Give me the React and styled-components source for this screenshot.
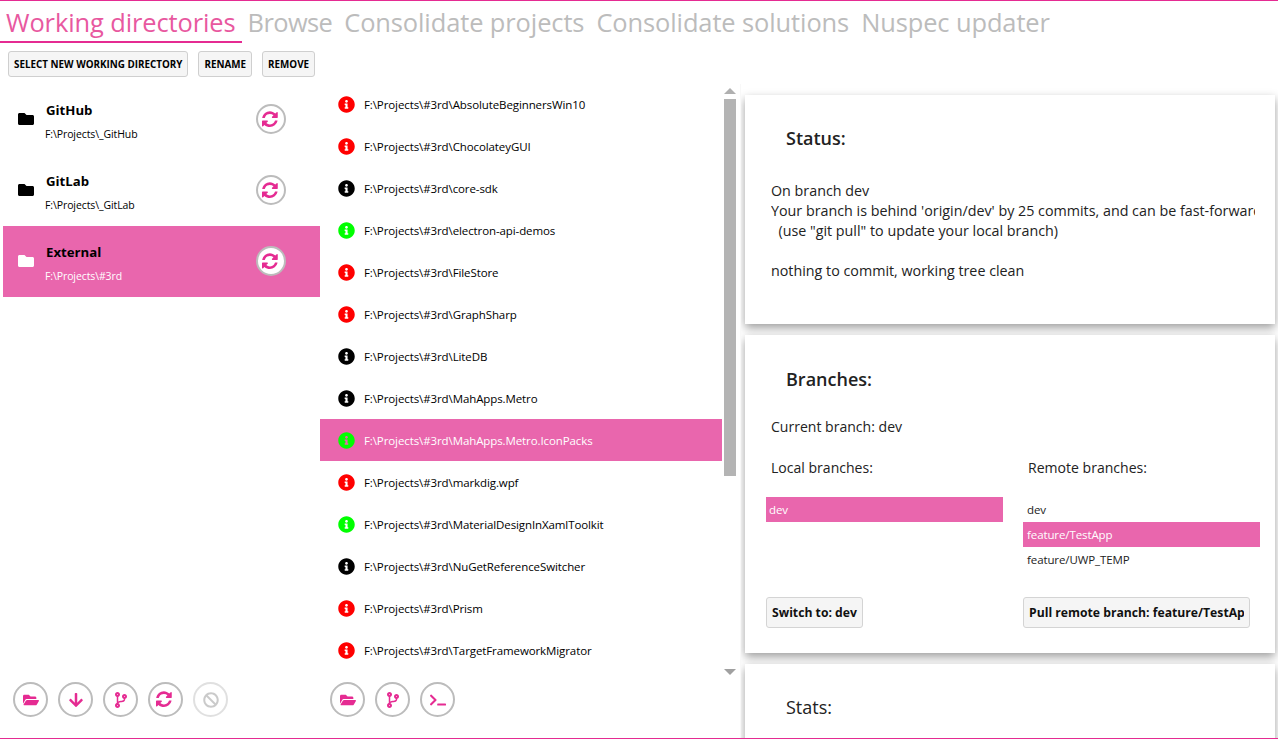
import React from 'react'
import styled, { createGlobalStyle } from 'styled-components'
import {
  FaFolder,
  FaFolderOpen,
  FaArrowDown,
  FaCodeBranch,
  FaBan,
  FaTerminal,
  FaInfoCircle,
} from 'react-icons/fa'

const PINK = '#e52b92'
const SELECTED = '#e966ad'

const tabs = ['Working directories', 'Browse', 'Consolidate projects', 'Consolidate solutions', 'Nuspec updater']

const directories = [
  { name: 'GitHub', path: 'F:\\Projects\\_GitHub' },
  { name: 'GitLab', path: 'F:\\Projects\\_GitLab' },
  { name: 'External', path: 'F:\\Projects\\#3rd', selected: true },
]

const repos = [
  ['AbsoluteBeginnersWin10', '#ff0000'],
  ['ChocolateyGUI', '#ff0000'],
  ['core-sdk', '#000000'],
  ['electron-api-demos', '#00ff00'],
  ['FileStore', '#ff0000'],
  ['GraphSharp', '#ff0000'],
  ['LiteDB', '#000000'],
  ['MahApps.Metro', '#000000'],
  ['MahApps.Metro.IconPacks', '#00ff00'],
  ['markdig.wpf', '#ff0000'],
  ['MaterialDesignInXamlToolkit', '#00ff00'],
  ['NuGetReferenceSwitcher', '#000000'],
  ['Prism', '#ff0000'],
  ['TargetFrameworkMigrator', '#ff0000'],
]

// the older, heavier refresh glyph; the one in the icon package is too thin
const RefreshIcon = () => (
  <svg viewBox="0 0 1792 1792" width="1.15em" height="1.15em" fill="currentColor">
    <path d="M1511 1056q0 5-1 7-64 268-268 434.5t-478 166.5q-146 0-282.5-55t-243.5-157l-129 129q-19 19-45 19t-45-19-19-45v-448q0-26 19-45t45-19h448q26 0 45 19t19 45-19 45l-137 137q71 66 161 102t187 36q134 0 250-65t186-179q11-17 53-117 8-23 30-23h192q13 0 22.5 9.5t9.5 22.5zm25-800v448q0 26-19 45t-45 19h-448q-26 0-45-19t-19-45 19-45l138-138q-148-137-349-137-134 0-250 65t-186 179q-11 17-53 117-8 23-30 23h-199q-13 0-22.5-9.5t-9.5-22.5v-7q65-268 270-434.5t480-166.5q146 0 284 55.5t245 156.5l130-129q19-19 45-19t45 19 19 45z" />
  </svg>
)

function App() {
  return (
    <Page>
      <GlobalStyle />
      <TabBar>
        {tabs.map((tab, i) => (
          <Tab key={tab} $active={i === 0} $tight={tab === 'Browse'}>{tab}</Tab>
        ))}
      </TabBar>

      <ActionBar>
        <ActionButton>SELECT NEW WORKING DIRECTORY</ActionButton>
        <ActionButton>RENAME</ActionButton>
        <ActionButton>REMOVE</ActionButton>
      </ActionBar>

      <Columns>
        <LeftPane>
          <DirList>
            {directories.map((d) => (
              <DirRow key={d.name} $selected={d.selected}>
                <DirIcon $selected={d.selected}><FaFolder /></DirIcon>
                <DirText>
                  <DirName>{d.name}</DirName>
                  <DirPath $selected={d.selected}>{d.path}</DirPath>
                </DirText>
                <SyncButton><RefreshIcon /></SyncButton>
              </DirRow>
            ))}
          </DirList>
          <Toolbar>
            <RoundButton><FaFolderOpen /></RoundButton>
            <RoundButton><FaArrowDown /></RoundButton>
            <RoundButton><FaCodeBranch /></RoundButton>
            <RoundButton><RefreshIcon /></RoundButton>
            <RoundButton $disabled><FaBan /></RoundButton>
          </Toolbar>
        </LeftPane>

        <MiddlePane>
          <ListArea>
            <RepoList>
              {repos.map(([name, color], i) => (
                <RepoRow key={name} $selected={i === 8}>
                  <RepoIcon $color={color}><FaInfoCircle /></RepoIcon>
                  F:\Projects\#3rd\{name}
                </RepoRow>
              ))}
            </RepoList>
            <ScrollBar>
              <ArrowUp />
              <Thumb />
              <ArrowDown />
            </ScrollBar>
          </ListArea>
          <MiddleToolbar>
            <RoundButton><FaFolderOpen /></RoundButton>
            <RoundButton><FaCodeBranch /></RoundButton>
            <RoundButton><FaTerminal /></RoundButton>
          </MiddleToolbar>
        </MiddlePane>

        <RightPane>
          <Card $height={229}>
            <CardTitle>Status:</CardTitle>
            <StatusText>{`On branch dev
Your branch is behind 'origin/dev' by 25 commits, and can be fast-forwarded.
  (use "git pull" to update your local branch)

nothing to commit, working tree clean`}</StatusText>
          </Card>

          <Card $height={318}>
            <BranchesTitle>Branches:</BranchesTitle>
            <CurrentBranch>Current branch: dev</CurrentBranch>
            <BranchColumns>
              <BranchColumn>
                <BranchHeading>Local branches:</BranchHeading>
                <BranchList>
                  <BranchItem $selected $local>dev</BranchItem>
                </BranchList>
                <SmallSpacer />
                <BranchButton>Switch to: dev</BranchButton>
              </BranchColumn>
              <BranchColumn $remote>
                <BranchHeading>Remote branches:</BranchHeading>
                <BranchList>
                  <BranchItem>dev</BranchItem>
                  <BranchItem $selected>feature/TestApp</BranchItem>
                  <BranchItem>feature/UWP_TEMP</BranchItem>
                </BranchList>
                <SmallSpacer />
                <BranchButton>
                  <ButtonLabel>Pull remote branch: feature/TestApp</ButtonLabel>
                </BranchButton>
              </BranchColumn>
            </BranchColumns>
          </Card>

          <Card $height={120}>
            <StatsTitle>Stats:</StatsTitle>
          </Card>
        </RightPane>
      </Columns>
    </Page>
  )
}

export default App

const GlobalStyle = createGlobalStyle`
  html, body {
    margin: 0;
    padding: 0;
    background: #fff;
    overflow: hidden;
  }
  * {
    box-sizing: border-box;
  }
`

const Page = styled.div`
  width: 1278px;
  height: 739px;
  display: flex;
  flex-direction: column;
  overflow: hidden;
  border-top: 1px solid ${PINK};
  border-bottom: 1px solid ${PINK};
  font-family: "Open Sans", "Noto Sans", sans-serif;
  color: #000;
`

const TabBar = styled.div`
  display: flex;
  height: 42px;
  flex: none;
`

const Tab = styled.div`
  height: 42px;
  padding: 3px 6px 0;
  font-size: 25.45px;
  line-height: 36px;
  letter-spacing: ${(p) => (p.$tight ? '-0.6px' : '-0.1px')};
  white-space: nowrap;
  color: ${(p) => (p.$active ? '#e8589f' : '#bcbcbc')};
  border-bottom: 2px solid ${(p) => (p.$active ? PINK : 'transparent')};
`

const ActionBar = styled.div`
  display: flex;
  gap: 10px;
  flex: none;
  height: 41px;
  padding: 8px 0 0 8px;
`

const ActionButton = styled.div`
  height: 26px;
  padding: 0 5px;
  display: flex;
  align-items: center;
  background: #f5f5f5;
  border: 1px solid #cfcfcf;
  border-radius: 3px;
  font-size: 9.85px;
  font-weight: 700;
  white-space: nowrap;
`

const Columns = styled.div`
  flex: 1;
  display: flex;
  min-height: 0;
`

const LeftPane = styled.div`
  width: 320px;
  flex: none;
  display: flex;
  flex-direction: column;
  padding-left: 3px;
`

const DirList = styled.div`
  flex: 1;
`

const DirRow = styled.div`
  height: 71px;
  display: flex;
  align-items: center;
  padding: 0 34px 0 15px;
  background: ${(p) => (p.$selected ? SELECTED : 'transparent')};
`

const DirIcon = styled.div`
  width: 28px;
  flex: none;
  display: flex;
  font-size: 16px;
  margin-top: -2px;
  color: ${(p) => (p.$selected ? '#fff' : '#000')};
`

const DirText = styled.div`
  flex: 1;
  display: flex;
  flex-direction: column;
  gap: 8px;
  margin-top: 7px;
`

const DirName = styled.div`
  font-size: 13.2px;
  line-height: 18px;
  font-weight: 700;
  margin-top: -4px;
`

const DirPath = styled.div`
  font-size: 10.5px;
  line-height: 14px;
  letter-spacing: -0.1px;
  margin-left: -1px;
  color: ${(p) => (p.$selected ? '#fff' : '#000')};
`

const SyncButton = styled.div`
  width: 30px;
  height: 30px;
  flex: none;
  margin-top: -1px;
  display: flex;
  align-items: center;
  justify-content: center;
  border-radius: 50%;
  border: 2px solid #bcbcbc;
  background: #fff;
  color: ${PINK};
  font-size: 16px;
`

const Toolbar = styled.div`
  display: flex;
  gap: 10px;
  flex: none;
  height: 63px;
  padding: 7px 0 0 10px;
`

const RoundButton = styled.div`
  width: 35px;
  height: 35px;
  display: flex;
  align-items: center;
  justify-content: center;
  border-radius: 50%;
  border: 2px solid #bcbcbc;
  color: ${PINK};
  font-size: 16px;
  opacity: ${(p) => (p.$disabled ? 0.45 : 1)};
  ${(p) => p.$disabled && 'color: #8c8c8c;'}
`

const MiddlePane = styled.div`
  width: 416px;
  flex: none;
  display: flex;
  flex-direction: column;
`

const ListArea = styled.div`
  flex: 1;
  display: flex;
  min-height: 0;
`

const RepoList = styled.div`
  width: 402px;
  flex: none;
  margin-top: -1px;
`

const RepoRow = styled.div`
  height: 42px;
  display: flex;
  align-items: center;
  padding-left: 18px;
  font-size: 11.5px;
  letter-spacing: -0.1px;
  white-space: nowrap;
  background: ${(p) => (p.$selected ? SELECTED : 'transparent')};
  color: ${(p) => (p.$selected ? '#fff' : '#000')};
`

const RepoIcon = styled.span`
  display: flex;
  font-size: 17px;
  margin-right: 9px;
  color: ${(p) => p.$color};
`

const ScrollBar = styled.div`
  width: 13px;
  margin-left: 1px;
  display: flex;
  flex-direction: column;
  align-items: center;
  padding-top: 4px;
`

const ArrowUp = styled.div`
  width: 0;
  height: 0;
  border-left: 6px solid transparent;
  border-right: 6px solid transparent;
  border-bottom: 6px solid #b0b0b0;
`

const ArrowDown = styled.div`
  width: 0;
  height: 0;
  margin-top: auto;
  border-left: 6px solid transparent;
  border-right: 6px solid transparent;
  border-top: 6px solid #a0a0a0;
`

const Thumb = styled.div`
  width: 12px;
  height: 377px;
  margin-top: 5px;
  background: #b4b4b4;
`

const MiddleToolbar = styled(Toolbar)`
  padding-left: 10px;
`

const RightPane = styled.div`
  flex: 1;
  min-width: 0;
  margin-left: 4px;
  padding: 11px 3px 0 4px;
  border-left: 1px solid #f8f8f8;
  display: flex;
  flex-direction: column;
  gap: 11px;
  overflow: hidden;
`

const Card = styled.div`
  height: ${(p) => p.$height}px;
  flex: none;
  background: #fff;
  box-shadow: 0 4px 9px rgba(0, 0, 0, 0.38);
  padding: 0 20px 0 26px;
  overflow: hidden;
`

const CardTitle = styled.div`
  font-size: 18px;
  line-height: 24px;
  font-weight: 600;
  margin: 31px 0 0 15px;
  color: #222;
`

const BranchesTitle = styled(CardTitle)`
  margin-top: 32px;
`

const StatsTitle = styled(CardTitle)`
  font-weight: 500;
  margin-top: 31px;
`

const StatusText = styled.div`
  margin-top: 31px;
  font-size: 14.3px;
  line-height: 20px;
  white-space: pre;
  overflow: hidden;
  color: #222;
`

const CurrentBranch = styled.div`
  margin-top: 26px;
  font-size: 14.05px;
  line-height: 20px;
  color: #222;
`

const BranchColumns = styled.div`
  display: flex;
  margin-top: 21px;
`

const BranchColumn = styled.div`
  width: ${(p) => (p.$remote ? '237px' : '257px')};
  flex: none;
  margin-left: ${(p) => (p.$remote ? '0' : '-5px')};
  display: flex;
  flex-direction: column;
`

const BranchHeading = styled.div`
  font-size: 14.05px;
  line-height: 20px;
  margin-left: 5px;
  color: #222;
`

const BranchList = styled.div`
  margin-top: 19px;
  height: 75px;
`

const BranchItem = styled.div`
  width: 237px;
  height: 25px;
  line-height: 25px;
  padding-left: ${(p) => (p.$local ? '3px' : '4px')};
  font-size: 11.5px;
  letter-spacing: -0.1px;
  white-space: nowrap;
  background: ${(p) => (p.$selected ? SELECTED : 'transparent')};
  color: ${(p) => (p.$selected ? '#fff' : '#222')};
`

const SmallSpacer = styled.div`
  height: 25px;
`

const BranchButton = styled.div`
  align-self: flex-start;
  height: 31px;
  max-width: 227px;
  padding: 0 5px;
  display: flex;
  align-items: center;
  background: #f5f5f5;
  border: 1px solid #d4d4d4;
  border-radius: 3px;
  font-size: 12.2px;
  font-weight: 700;
  white-space: nowrap;
  color: #111;
`

const ButtonLabel = styled.span`
  display: block;
  overflow: hidden;
`
